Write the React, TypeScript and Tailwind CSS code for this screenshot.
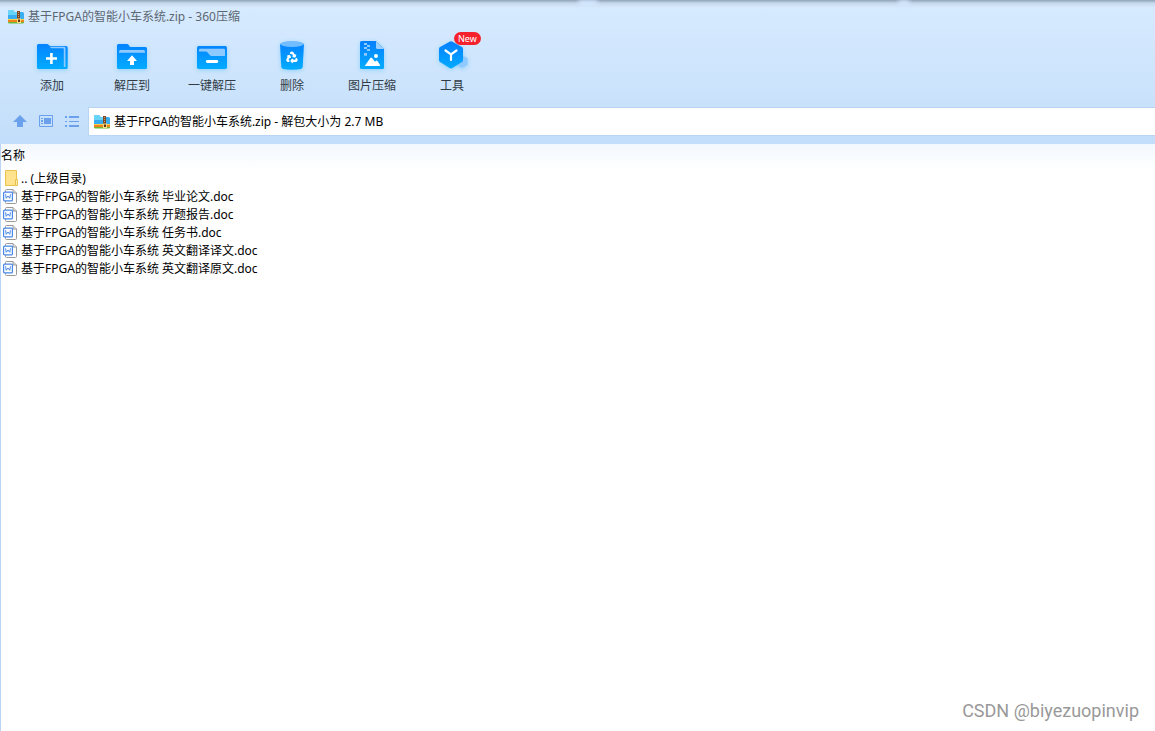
import type { ReactNode } from "react";

const ARCHIVE = "基于FPGA的智能小车系统.zip";

const files = [
  "基于FPGA的智能小车系统 毕业论文.doc",
  "基于FPGA的智能小车系统 开题报告.doc",
  "基于FPGA的智能小车系统 任务书.doc",
  "基于FPGA的智能小车系统 英文翻译译文.doc",
  "基于FPGA的智能小车系统 英文翻译原文.doc",
];

function ArchiveIcon() {
  return (
    <svg className="shrink-0" width="16" height="16" viewBox="0 0 16 16" aria-hidden>
      <path d="M0 2.500Q0 1 1.500 1H5l1.500 2H14.500Q16 3 16 4.500V11H0z" fill="#38adf0" />
      <path d="M0 2.500Q0 1 1.500 1H5l1.500 2H9v3H0z" fill="#66d3f7" />
      <path d="M0 10h16v1H0z" fill="#f9d34b" />
      <path d="M0 11h16v2H0z" fill="#f0821e" />
      <path d="M0 13h16v.5q0 1-1.500 1h-13Q0 14.500 0 13.500z" fill="#6dbb35" />
      <path d="M9 2h3v12H9z" fill="#7d4a25" />
      <path d="M10 3h1v1h-1zM10 5h1v1h-1zM10 7h1v1h-1z" fill="#c99a62" />
      <path d="M9 9.500h4V14H9z" fill="#f7dc83" />
      <path d="M10 10.500h2V13h-2z" fill="#5c3517" />
    </svg>
  );
}

function ToolSvg({ children }: { children: ReactNode }) {
  return (
    <svg className="drop-shadow-sm drop-shadow-sky-500/30" width="32" height="32" viewBox="0 0 32 32" fill="none" aria-hidden>
      <defs>
        <linearGradient id="tool-fill" gradientUnits="userSpaceOnUse" x1="0" y1="2" x2="0" y2="30">
          <stop stopColor="#0580ff" />
          <stop offset="1" stopColor="#02adff" />
        </linearGradient>
      </defs>
      {children}
    </svg>
  );
}

function IconAdd() {
  return (
    <ToolSvg>
      <path d="M1 5.500Q1 4 2.500 4H11q1 0 1.500.8L14 6h16q1.700 0 1.700 1.700V27.500q0 1.500-1.500 1.500H2.500Q1 29 1 27.500z" fill="url(#tool-fill)" />
      <path d="M14 6.700h14.500q1 0 1 1V27h-1.700V9q0-.8-.8-.8H15z" fill="#8ecaff" />
      <path d="M15.400 13v11M10 18.500h11" stroke="#fff" strokeWidth="2.600" />
    </ToolSvg>
  );
}

function IconExtract() {
  return (
    <ToolSvg>
      <path d="M1 5.500Q1 4 2.500 4H11q1 0 1.500.8L14 7h15.500Q31 7 31 8.500v19q0 1.500-1.500 1.500h-27Q1 29 1 27.500z" fill="url(#tool-fill)" />
      <path d="M3 12.700v-1.200Q3 10 4.500 10h23q1.500 0 1.500 1.500v1.200z" fill="#8ecaff" />
      <path d="M16 15.300l5 5.600h-3V25h-4v-4.100h-3z" fill="#fff" />
    </ToolSvg>
  );
}

function IconQuickExtract() {
  return (
    <ToolSvg>
      <rect x="1" y="6" width="30" height="23" rx="1.700" fill="url(#tool-fill)" />
      <path d="M3 11.500V10q0-1.300 1.300-1.300h23.400Q29 8.700 29 10v6H15.500q-1 0-1.600-.8l-2.500-2.900q-.7-.8-2-.8z" fill="#8ecaff" />
      <path d="M11.300 21.500h9.600" stroke="#fff" strokeWidth="2.800" strokeLinecap="round" />
    </ToolSvg>
  );
}

function IconDelete() {
  return (
    <ToolSvg>
      <path d="M4 4h24l-1.300 23q-.2 1.600-2 2.100-8.700 1.200-17.400 0-1.800-.5-2-2.100z" fill="url(#tool-fill)" />
      <ellipse cx="16" cy="4" rx="12" ry="2.900" fill="#72bdff" />
      <g transform="translate(9.700 11) scale(.52)" stroke="#fff" strokeWidth="4" strokeLinejoin="round">
        <path d="M7 19H4.800a1.800 1.800 0 0 1-1.600-2.700L7.200 9.500" />
        <path d="M11 19h8.200a1.800 1.800 0 0 0 1.600-2.700l-1.200-2.100" />
        <path d="M14 16l-3 3 3 3" />
        <path d="M8.300 13.600L7.200 9.500l-4.100 1.100" />
        <path d="M9.300 5.800l1.100-1.900a1.800 1.800 0 0 1 3.100 0l4 6.900" />
        <path d="M13.400 9.600l4.100 1.100 1.100-4.100" />
      </g>
    </ToolSvg>
  );
}

function IconImage() {
  return (
    <ToolSvg>
      <path d="M4 2.500Q4 1 5.500 1H20l8 8v18.500q0 1.500-1.500 1.500h-21Q4 29 4 27.500z" fill="url(#tool-fill)" />
      <path d="M20 1l8 8h-6.500Q20 9 20 7.500z" fill="#9bd0ff" />
      <path d="M8 3h3v2H8zM11 5h3v2h-3zM8 7h3v2H8zM11 9h3v2h-3zM8 13h3v2.700H8z" fill="#8ecaff" />
      <circle cx="20" cy="16" r="2" fill="#fff" />
      <path d="M8.700 26l5.700-8q.8-1 1.600 0l3 3.800 1-1q.8-.7 1.500.1L24 25q.2 1-.8 1z" fill="#fff" />
    </ToolSvg>
  );
}

function IconTools() {
  return (
    <ToolSvg>
      <path d="M26 15l5.600 3.300v6.400L26 28l-5.500-3.300v-6.400z" fill="#8ecaff" />
      <path d="M13.600 1.700q1.400-.8 2.800 0l9.500 5.300q1.100.7 1.100 2v11q0 1.300-1.100 2l-9.500 6q-1.400.8-2.800 0L4.100 22Q3 21.300 3 20V9q0-1.300 1.100-2z" fill="url(#tool-fill)" />
      <path d="M9.500 10.500L15 14.300l5.500-3.800M15 14.300V20" stroke="#fff" strokeWidth="2.200" strokeLinecap="round" strokeLinejoin="round" />
    </ToolSvg>
  );
}

function FolderIcon() {
  return (
    <svg className="shrink-0" width="16" height="18" viewBox="0 0 16 18" aria-hidden>
      <path d="M2.500 .5h11v15h-11z" fill="#ffe38f" stroke="#e8c24c" />
      <path d="M12.500 9.500h2v6h-2z" fill="#ffefb5" stroke="#e8c24c" />
    </svg>
  );
}

function DocIcon() {
  return (
    <svg className="shrink-0" width="16" height="18" viewBox="0 0 16 18" fill="none" aria-hidden>
      <path d="M2.500 4V2.500q0-1 1-1H10L13.500 5v9.500q0 1-1 1h-9q-1 0-1-1V12" fill="#fff" stroke="#9a9a9a" />
      <path d="M10 1.500V5h3.500" fill="#ddd" stroke="#9a9a9a" />
      <rect x=".6" y="4.100" width="8.800" height="8.800" rx="1" fill="#fff" stroke="#4687e8" strokeWidth="1.200" />
      <path d="M2.600 6.300l.6 4L5 8l1.800 2.300.6-4" stroke="#4687e8" strokeWidth="1" />
    </svg>
  );
}

const tools = [
  { label: "添加", icon: <IconAdd /> },
  { label: "解压到", icon: <IconExtract /> },
  { label: "一键解压", icon: <IconQuickExtract /> },
  { label: "删除", icon: <IconDelete /> },
  { label: "图片压缩", icon: <IconImage /> },
  { label: "工具", icon: <IconTools />, badge: "New" },
];

function Toolbar() {
  return (
    <nav aria-label="工具栏" className="flex px-3 pt-[7px]">
      {tools.map((tool) => (
        <button key={tool.label} type="button" className="relative flex w-20 flex-col items-center gap-[5px] text-[#333c46]">
          {tool.icon}
          <span>{tool.label}</span>
          {tool.badge ? (
            <span className="absolute -top-2 left-[42px] rounded-full bg-[#f5222d] px-1 text-[9px] leading-[13px] text-white">
              {tool.badge}
            </span>
          ) : null}
        </button>
      ))}
    </nav>
  );
}

function AddressBar() {
  return (
    <div className="mt-3 flex items-center">
      <div className="flex gap-2 pr-1.5 pl-3 text-[#6aa0ec]">
        <button type="button" aria-label="上一级">
          <svg width="18" height="16" viewBox="0 0 18 16" aria-hidden>
            <path d="M8 1l7 7h-4v5H5V8H1z" fill="currentColor" />
          </svg>
        </button>
        <button type="button" aria-label="预览">
          <svg width="18" height="16" viewBox="0 0 18 16" fill="none" aria-hidden>
            <path d="M1.500 1.500h13v11h-13z" stroke="currentColor" />
            <path d="M6 4h7v6H6zM3 4h2v1H3zM3 6h2v2H3zM3 9h2v1H3z" fill="currentColor" />
          </svg>
        </button>
        <button type="button" aria-label="列表">
          <svg width="18" height="16" viewBox="0 0 18 16" aria-hidden>
            <path d="M1 2h2v2H1zM1 7h2v1H1zM1 11h2v2H1zM5 2h10v2H5zM5 7h10v1H5zM5 11h10v2H5z" fill="currentColor" />
          </svg>
        </button>
      </div>
      <label className="flex h-[29px] min-w-0 flex-1 items-center gap-1 border border-r-0 border-[#b9d5f3] bg-white pl-[5px]">
        <ArchiveIcon />
        <input
          type="text"
          aria-label="路径"
          defaultValue={`${ARCHIVE} - 解包大小为 2.7 MB`}
          className="min-w-0 flex-1 bg-transparent text-black outline-none"
        />
      </label>
    </div>
  );
}

function FileList() {
  return (
    <table className="w-full border-collapse text-left text-black">
      <thead>
        <tr className="h-[26px] bg-linear-to-b from-[#f2f8fe] to-white">
          <th scope="col" className="p-0 pb-0.5 font-normal">
            名称
          </th>
        </tr>
      </thead>
      <tbody>
        <tr>
          <td className="p-0 pl-0.5">
            <div className="flex h-[18px] items-center gap-0.5">
              <FolderIcon />
              .. (上级目录)
            </div>
          </td>
        </tr>
        {files.map((name) => (
          <tr key={name}>
            <td className="p-0 pl-0.5">
              <div className="flex h-[18px] items-center gap-0.5">
                <DocIcon />
                {name}
              </div>
            </td>
          </tr>
        ))}
      </tbody>
    </table>
  );
}

export default function App() {
  return (
    <div className="relative flex min-h-screen flex-col bg-white text-[12px] leading-[18px] font-['Noto_Sans','Noto_Sans_CJK_SC',sans-serif]">
      <header className="bg-linear-to-b from-[#d8ebff] to-[#c3defa] pb-2">
        <div className="flex h-2 bg-linear-to-b from-[#8ea3b9] via-[#c6d9ec] via-40% to-[#d8ebff]">
          <span className="ml-[50%] h-1.5 w-5 rounded-b-full bg-[#d4e8ff] blur-[2px]" />
          <span className="ml-[26%] h-1.5 w-3 rounded-b-full bg-[#d4e8ff] blur-[2px]" />
        </div>
        <div className="flex h-[17px] items-center gap-1 pl-2 text-[#5d6771]">
          <ArchiveIcon />
          <h1>{ARCHIVE} - 360压缩</h1>
        </div>
        <div className="pt-2">
          <Toolbar />
        </div>
        <AddressBar />
      </header>
      <main className="flex-1 border-l border-[#b9d5f6]">
        <FileList />
      </main>
      <p className="absolute right-4 bottom-2 font-[Roboto,sans-serif] text-lg leading-6 text-[#999]">
        CSDN @biyezuopinvip
      </p>
    </div>
  );
}
